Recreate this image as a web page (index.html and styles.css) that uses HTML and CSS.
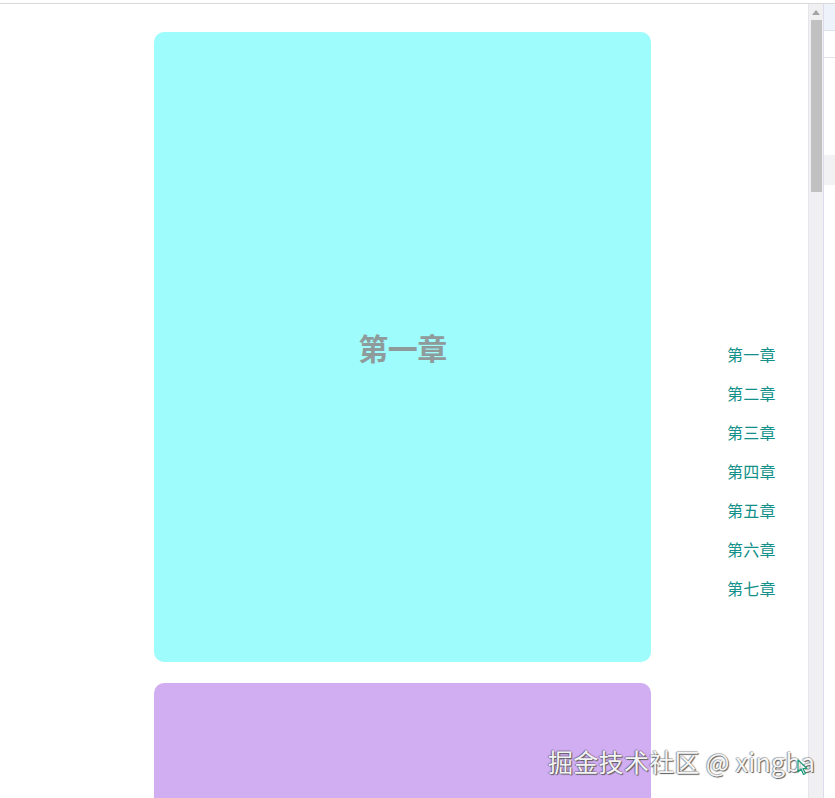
FILE: index.html
```html
<!DOCTYPE html>
<html lang="zh">
<head>
<meta charset="utf-8">
<title>章节导航</title>
<link rel="stylesheet" href="styles.css">
</head>
<body>
<div class="window">
  <div class="viewport">
    <div class="page">
      <div class="chapters">
        <section class="chapter c1"><h2 class="chapter-title">第一章</h2></section>
        <section class="chapter c2"></section>
      </div>
      <nav class="toc">
        <a class="toc-item">第一章</a>
        <a class="toc-item">第二章</a>
        <a class="toc-item">第三章</a>
        <a class="toc-item">第四章</a>
        <a class="toc-item">第五章</a>
        <a class="toc-item">第六章</a>
        <a class="toc-item">第七章</a>
      </nav>
    </div>
    <div class="scrollbar">
      <div class="scroll-up"></div>
      <div class="scroll-thumb"></div>
    </div>
    <div class="side-strip">
      <div class="strip-top"></div>
      <div class="strip-mid"></div>
      <div class="strip-low"></div>
      <div class="strip-gray"></div>
    </div>
  </div>
  <div class="watermark">掘金技术社区 @ xingba</div>
  <svg class="cursor" width="12" height="18" viewBox="0 0 12 18"><path d="M1 1 L1 13 L4 10 L6.5 15.5 L8.5 14.5 L6 9.5 L10 9.5 Z" fill="#ffffff" fill-opacity="0.6" stroke="#1a9a7a" stroke-width="1.2" stroke-linejoin="round"/></svg>
</div>
</body>
</html>
```
FILE: styles.css
```css
html, body {
  margin: 0;
  padding: 0;
  background: #ffffff;
  overflow: hidden;
}
body {
  font-family: "Noto Sans CJK SC", "Liberation Sans", sans-serif;
}
.window {
  position: relative;
  width: 835px;
  height: 798px;
  border-top: 3px solid #ffffff;
  box-sizing: border-box;
}
.viewport {
  display: flex;
  height: 795px;
  border-top: 1px solid #d9d9d9;
  box-sizing: border-box;
}
.page {
  width: 808px;
  display: flex;
  overflow: hidden;
}
.chapters {
  display: flex;
  flex-direction: column;
  gap: 21px;
  padding-top: 28px;
  margin-left: 154px;
}
.chapter {
  width: 497px;
  height: 630px;
  border-radius: 10px;
  display: flex;
  align-items: center;
  justify-content: center;
  flex-shrink: 0;
}
.c1 { background: #9ffcfc; }
.c2 { background: #d1aef2; }
.chapter-title {
  margin: 0;
  font-size: 30px;
  font-weight: 700;
  color: #8f9a9a;
  letter-spacing: -0.5px;
}
.toc {
  display: flex;
  flex-direction: column;
  gap: 16px;
  margin-left: 76px;
  padding-top: 339px;
}
.toc-item {
  font-size: 16px;
  line-height: 23px;
  color: #139089;
  white-space: nowrap;
  letter-spacing: 0.3px;
}
.scrollbar {
  width: 15px;
  background: #f0f0f3;
  display: flex;
  flex-direction: column;
  align-items: center;
  border-left: 1px solid #e6e6ea;
  box-sizing: border-box;
}
.scroll-up {
  width: 0;
  height: 0;
  margin-top: 6px;
  border-left: 4px solid transparent;
  border-right: 4px solid transparent;
  border-bottom: 5px solid #a3a3a3;
}
.scroll-thumb {
  margin-top: 5px;
  width: 11px;
  height: 172px;
  background: #c1c1c1;
}
.side-strip {
  width: 12px;
  display: flex;
  flex-direction: column;
  border-left: 1px solid #dcdcec;
  box-sizing: border-box;
  background: #ffffff;
}
.strip-top {
  height: 26px;
  background: #eef2fb;
  border-bottom: 1px solid #dfe3ee;
}
.strip-mid {
  height: 26px;
  border-bottom: 1px solid #e3e3ea;
}
.strip-low {
  height: 97px;
}
.strip-gray {
  height: 30px;
  background: #f2f2f4;
}
.watermark {
  position: absolute;
  left: 548px;
  top: 741px;
  font-size: 25px;
  line-height: 34px;
  color: #f4f4f4;
  white-space: nowrap;
  letter-spacing: 0.3px;
  text-shadow: 1px 1px 1px #5a5a5a, -1px 0 1px rgba(0,0,0,0.35), 0 -1px 1px rgba(0,0,0,0.25);
}
.cursor {
  position: absolute;
  left: 797px;
  top: 756px;
}
```
